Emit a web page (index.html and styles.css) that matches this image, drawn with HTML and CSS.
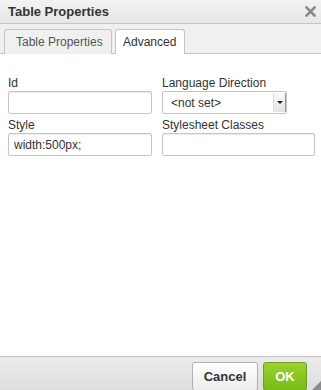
FILE: index.html
```html
<html>
<head>
    <title>Table Properties</title>
    <link rel="stylesheet" href="styles.css">
</head>
<body>

<div class="dialog">
    <div class="head">
        <span class="title">Table Properties</span>
        <svg class="close" width="11" height="11" viewBox="0 0 11 11">
            <path d="M1.5 1.5 L9.5 9.5 M9.5 1.5 L1.5 9.5" stroke="#8a8a8a" stroke-width="2.6" stroke-linecap="square"/>
        </svg>
    </div>

    <div class="tabs">
        <div class="tab">Table Properties</div>
        <div class="tab active">Advanced</div>
    </div>

    <div class="body">
        <div class="form">
            <div class="field">
                <label>Id</label>
                <input type="text" class="text">
            </div>
            <div class="field">
                <label>Language Direction</label>
                <div class="select">
                    <span>&lt;not set&gt;</span>
                    <span class="arrow"></span>
                </div>
            </div>
            <div class="field">
                <label>Style</label>
                <input type="text" class="text" value="width:500px;">
            </div>
            <div class="field">
                <label>Stylesheet Classes</label>
                <input type="text" class="text wide">
            </div>
        </div>
    </div>

    <div class="foot">
        <button class="btn">Cancel</button>
        <button class="btn ok">OK</button>
        <span class="grip"></span>
    </div>
</div>

</body>
</html>
```

FILE: styles.css
```css
body {
    margin: 0;
    font-family: "Liberation Sans", Arial, sans-serif;
    font-size: 12px;
    color: #333;
    background: #fff;
}
.dialog {
    display: flex;
    flex-direction: column;
    height: 390px;
    overflow: hidden;
}
.head {
    display: flex;
    align-items: center;
    justify-content: space-between;
    height: 23px;
    padding: 0 5px 0 8px;
    background: linear-gradient(#f3f3f3, #e6e6e6);
    border-bottom: 1px solid #c5c5c5;
}
.title {
    font-weight: bold;
    font-size: 13px;
    color: #333;
}
.close {
    display: block;
}
.tabs {
    display: flex;
    gap: 3px;
    padding: 4px 0 0 4px;
    background: #f0f0f0;
    border-bottom: 1px solid #c5c5c5;
}
.tab {
    box-sizing: border-box;
    width: 108px;
    height: 25px;
    line-height: 25px;
    padding-left: 11px;
    border: 1px solid #c5c5c5;
    border-bottom: none;
    border-radius: 3px 3px 0 0;
    background: #f0f0f0;
    color: #555;
    margin-top: 1px;
    margin-bottom: -1px;
}
.tab.active {
    width: 70px;
    height: 25px;
    padding-left: 7px;
    background: #fff;
    color: #333;
}
.body {
    flex: 1;
    padding: 22px 0 0 8px;
}
.form {
    display: grid;
    grid-template-columns: 144px 153px;
    column-gap: 10px;
    row-gap: 4px;
}
.field label {
    display: block;
    line-height: 15px;
}
.text {
    display: block;
    box-sizing: border-box;
    width: 144px;
    height: 23px;
    margin: 0;
    padding: 0 5px;
    border: 1px solid #c5c5c5;
    border-radius: 2px;
    box-shadow: inset 0 1px 1px rgba(0,0,0,0.08);
    font: inherit;
    color: #333;
    background: #fff;
}
.text.wide {
    width: 153px;
}
.select {
    display: flex;
    align-items: center;
    justify-content: space-between;
    box-sizing: border-box;
    width: 125px;
    height: 23px;
    padding: 0 1px 0 8px;
    border: 1px solid #c5c5c5;
    border-radius: 2px;
    background: #fff;
}
.arrow {
    position: relative;
    width: 11px;
    height: 19px;
    background: linear-gradient(#fafafa, #e3e3e3);
    border-left: 1px solid #ddd;
    box-shadow: 1px 0 0 #999;
}
.arrow::after {
    content: "";
    position: absolute;
    left: 3px;
    top: 8px;
    border-left: 3px solid transparent;
    border-right: 3px solid transparent;
    border-top: 3px solid #222;
}
.foot {
    position: relative;
    display: flex;
    justify-content: flex-end;
    gap: 5px;
    height: 34px;
    padding: 5px 14px 0 0;
    box-sizing: border-box;
    background: linear-gradient(#ebebeb, #dedede);
    border-top: 1px solid #c5c5c5;
}
.btn {
    width: 66px;
    height: 29px;
    padding: 0;
    border: 1px solid #b1b1b1;
    border-radius: 3px;
    background: linear-gradient(#fff, #ececec);
    font-family: "Liberation Sans", Arial, sans-serif;
    font-size: 13px;
    font-weight: bold;
    color: #333;
}
.btn.ok {
    width: 44px;
    border-color: #6fa11c;
    background: linear-gradient(#9bd22f, #77bb16);
    color: #fff;
}
.grip {
    position: absolute;
    right: 0;
    bottom: 0;
    border-left: 9px solid transparent;
    border-bottom: 9px solid #8a8a8a;
}
```
